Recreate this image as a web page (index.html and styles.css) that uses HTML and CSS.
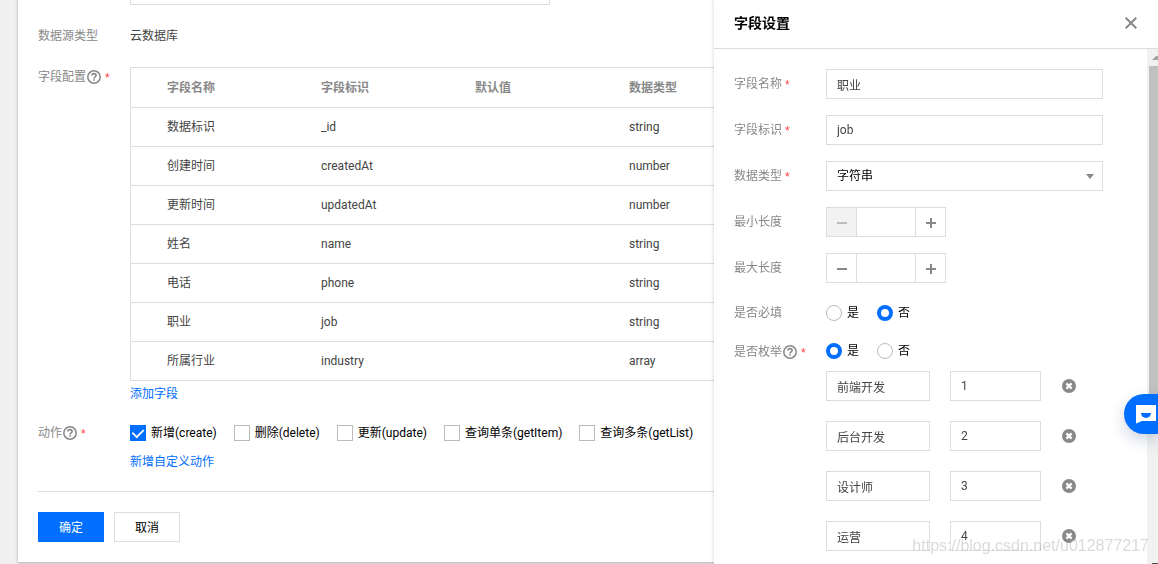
FILE: index.html
```html
<!DOCTYPE html>
<html lang="zh-CN">
<head>
<meta charset="utf-8">
<title>字段设置</title>
<meta name="viewport" content="width=device-width, initial-scale=1">
<link rel="stylesheet" href="styles.css">
</head>
<body>
<svg class="sprite" aria-hidden="true">
  <symbol id="help" viewBox="0 0 16 16">
    <circle cx="8" cy="8" r="6.2" fill="none" stroke="currentColor" stroke-width="1.5"/>
    <path d="M5.9 6.6c0-1.2.9-2 2.1-2s2.1.7 2.1 1.8c0 1.5-2 1.5-2 3" fill="none" stroke="currentColor" stroke-width="1.6"/>
    <path d="M7.3 10.2h1.6v1.5H7.3z" fill="currentColor"/>
  </symbol>
  <symbol id="remove" viewBox="0 0 14 14">
    <circle cx="7" cy="7" r="7" fill="currentColor"/>
    <path d="M4.4 4.4l5.2 5.2M9.6 4.4L4.4 9.6" stroke="#fff" stroke-width="2.2"/>
  </symbol>
  <symbol id="minus" viewBox="0 0 10 10"><path d="M0 4h10v2H0z" fill="currentColor"/></symbol>
  <symbol id="plus" viewBox="0 0 10 10"><path d="M0 4h4V0h2v4h4v2H6v4H4V6H0z" fill="currentColor"/></symbol>
</svg>

<main class="card">
  <form class="model-form">
    <div class="form-row">
      <span class="label"></span>
      <div class="control"><input class="text-input name-input" type="text" aria-label="名称"></div>
    </div>
    <div class="form-row">
      <span class="label static-text">数据源类型</span>
      <div class="control static-text">云数据库</div>
    </div>
    <div class="form-row">
      <span class="label">字段配置<svg class="help-icon"><use href="#help"/></svg><span class="required">*</span></span>
      <div class="control">
        <table class="field-table">
          <colgroup><col class="col-first"><col class="col-mid"><col class="col-mid"><col></colgroup>
          <thead><tr><th>字段名称</th><th>字段标识</th><th>默认值</th><th>数据类型</th></tr></thead>
          <tbody>
            <tr><td>数据标识</td><td>_id</td><td></td><td>string</td></tr>
            <tr><td>创建时间</td><td>createdAt</td><td></td><td>number</td></tr>
            <tr><td>更新时间</td><td>updatedAt</td><td></td><td>number</td></tr>
            <tr><td>姓名</td><td>name</td><td></td><td>string</td></tr>
            <tr><td>电话</td><td>phone</td><td></td><td>string</td></tr>
            <tr><td>职业</td><td>job</td><td></td><td>string</td></tr>
            <tr><td>所属行业</td><td>industry</td><td></td><td>array</td></tr>
          </tbody>
        </table>
        <a class="link link-field" href="#">添加字段</a>
      </div>
    </div>
    <div class="form-row">
      <span class="label">动作<svg class="help-icon"><use href="#help"/></svg><span class="required">*</span></span>
      <div class="control">
        <div class="checks">
          <label class="check"><input type="checkbox" checked>新增(create)</label>
          <label class="check"><input type="checkbox">删除(delete)</label>
          <label class="check"><input type="checkbox">更新(update)</label>
          <label class="check"><input type="checkbox">查询单条(getItem)</label>
          <label class="check"><input type="checkbox">查询多条(getList)</label>
        </div>
        <a class="link link-action" href="#">新增自定义动作</a>
      </div>
    </div>
    <div class="actions">
      <button class="btn btn-primary" type="button">确定</button>
      <button class="btn" type="button">取消</button>
    </div>
  </form>
</main>

<aside class="drawer">
  <header class="drawer-head">
    <h2>字段设置</h2>
    <button class="icon-btn" type="button" aria-label="关闭"><svg class="close-icon" viewBox="0 0 12 12"><path d="M.7.7l10.6 10.6M11.3.7L.7 11.3" stroke="currentColor" stroke-width="2"/></svg></button>
  </header>
  <div class="drawer-main">
    <form class="drawer-form">
      <div class="field">
        <label class="label" for="f-name">字段名称<span class="required">*</span></label>
        <input class="text-input" id="f-name" type="text" value="职业">
      </div>
      <div class="field">
        <label class="label" for="f-key">字段标识<span class="required">*</span></label>
        <input class="text-input" id="f-key" type="text" value="job">
      </div>
      <div class="field">
        <label class="label" for="f-type">数据类型<span class="required">*</span></label>
        <div class="select-wrap"><select class="text-input select" id="f-type"><option>字符串</option></select></div>
      </div>
      <div class="field">
        <label class="label" for="f-min">最小长度</label>
        <div class="stepper">
          <button type="button" disabled aria-label="减少"><svg><use href="#minus"/></svg></button>
          <input id="f-min" type="text">
          <button type="button" aria-label="增加"><svg><use href="#plus"/></svg></button>
        </div>
      </div>
      <div class="field">
        <label class="label" for="f-max">最大长度</label>
        <div class="stepper">
          <button type="button" aria-label="减少"><svg><use href="#minus"/></svg></button>
          <input id="f-max" type="text">
          <button type="button" aria-label="增加"><svg><use href="#plus"/></svg></button>
        </div>
      </div>
      <div class="field field-required">
        <span class="label">是否必填</span>
        <div class="radios">
          <label class="radio"><input type="radio" name="required">是</label>
          <label class="radio"><input type="radio" name="required" checked>否</label>
        </div>
      </div>
      <div class="field field-enum">
        <span class="label">是否枚举<svg class="help-icon"><use href="#help"/></svg><span class="required">*</span></span>
        <div>
          <div class="radios">
            <label class="radio"><input type="radio" name="enum" checked>是</label>
            <label class="radio"><input type="radio" name="enum">否</label>
          </div>
          <div class="enum-list">
            <div class="enum-row"><input class="text-input" type="text" value="前端开发" aria-label="枚举名称"><input class="text-input" type="text" value="1" aria-label="枚举值"><button class="icon-btn" type="button" aria-label="删除"><svg class="remove-icon"><use href="#remove"/></svg></button></div>
            <div class="enum-row"><input class="text-input" type="text" value="后台开发" aria-label="枚举名称"><input class="text-input" type="text" value="2" aria-label="枚举值"><button class="icon-btn" type="button" aria-label="删除"><svg class="remove-icon"><use href="#remove"/></svg></button></div>
            <div class="enum-row"><input class="text-input" type="text" value="设计师" aria-label="枚举名称"><input class="text-input" type="text" value="3" aria-label="枚举值"><button class="icon-btn" type="button" aria-label="删除"><svg class="remove-icon"><use href="#remove"/></svg></button></div>
            <div class="enum-row"><input class="text-input" type="text" value="运营" aria-label="枚举名称"><input class="text-input" type="text" value="4" aria-label="枚举值"><button class="icon-btn" type="button" aria-label="删除"><svg class="remove-icon"><use href="#remove"/></svg></button></div>
          </div>
        </div>
      </div>
    </form>
    <div class="scrollbar" aria-hidden="true">
      <svg class="scroll-arrow" viewBox="0 0 9 17"><path d="M3 11l4-4h2v4z" fill="#a3a3a3"/></svg>
      <div class="scroll-thumb"></div>
      <div class="scroll-end"></div>
    </div>
  </div>
</aside>

<button class="chat" type="button" aria-label="在线咨询">
  <svg class="chat-icon" viewBox="0 0 20 20"><path d="M0 1h20v16H6l-6 2.5z" fill="#fff"/><path d="M5 9h10a5 5 0 0 1-10 0z" fill="#006eff"/></svg>
</button>
<div class="watermark">https://blog.csdn.net/u012877217</div>
</body>
</html>
```

FILE: styles.css
```css
* { box-sizing: border-box; }

html, body { height: 100%; }

body {
  margin: 0;
  overflow: hidden;
  background: #f0f0f0;
  color: #444;
  font: 12px/20px Roboto, "Noto Sans CJK SC", sans-serif;
}

input, button, select { font: inherit; color: inherit; margin: 0; }
button { cursor: pointer; }
.sprite { display: none; }

/* Form card, scrolled so that its first input is partly out of view */
.card {
  margin: -45px 0 0 18px;
  padding: 20px;
  background: #fff;
  box-shadow: 0 1px 3px rgba(0, 0, 0, .3);
}
.model-form { display: flex; flex-direction: column; gap: 20px; }
.form-row { display: grid; grid-template-columns: 92px minmax(0, 1fr); }

.label { display: flex; align-items: center; align-self: start; color: #888; white-space: nowrap; }
.help-icon { width: 16px; height: 16px; }
.required { margin-left: 3px; padding-top: 2px; color: #ff4040; font-family: "Liberation Sans", sans-serif; line-height: 16px; }
.static-text { line-height: 22px; }

.text-input {
  display: block;
  width: 100%;
  height: 30px;
  padding: 0 10px;
  border: 1px solid #ddd;
  border-radius: 0;
  background: #fff;
  outline: none;
}
.name-input { max-width: 420px; }

.field-table {
  width: 100%;
  table-layout: fixed;
  border: 1px solid #ddd;
  border-bottom: 0;
  border-spacing: 0;
}
.col-first { width: 180px; }
.col-mid { width: 154px; }
.field-table th, .field-table td {
  height: 39px;
  padding: 0 10px;
  border-bottom: 1px solid #ddd;
  text-align: left;
}
.field-table th { height: 40px; color: #888; font-weight: 700; }
.field-table tr > :first-child { padding-left: 36px; }

.link { display: block; width: max-content; line-height: 18px; color: #006eff; text-decoration: none; }
.link-field { margin-top: 4px; }
.link-action { margin-top: 10px; }

.checks { display: flex; gap: 17px; color: #000; white-space: nowrap; }
.check, .radio { display: flex; align-items: center; gap: 5px; }
.check input {
  width: 16px;
  height: 16px;
  border: 1px solid #bbb;
  appearance: none;
  background: #fff;
}
.check input:checked { display: grid; place-items: center; border-color: #006eff; background: #006eff; }
.check input:checked::before {
  content: "";
  width: 10px;
  height: 6px;
  margin-bottom: 3px;
  border: solid #fff;
  border-width: 0 0 2px 2px;
  transform: rotate(-45deg) scale(.9);
}

.actions { display: flex; gap: 10px; padding-top: 20px; border-top: 1px solid #ddd; }
.btn { height: 30px; padding: 1px 20px 0; border: 1px solid #ddd; background: #fff; color: #000; }
.btn-primary { border-color: #006eff; background: #006eff; color: #fff; }

/* Side drawer over the card */
.drawer {
  position: fixed;
  top: 0;
  right: 0;
  bottom: 0;
  display: flex;
  flex-direction: column;
  width: 444px;
  background: #fff;
  box-shadow: 0 0 4px rgba(0, 0, 0, .2);
}
.drawer-head {
  display: flex;
  align-items: center;
  justify-content: space-between;
  height: 49px;
  padding: 0 21px 2px 20px;
  border-bottom: 1px solid #ddd;
}
.drawer-head h2 { margin: 0; color: #000; font-size: 14px; font-weight: 700; }
.icon-btn { display: flex; padding: 0; border: 0; background: none; color: #888; }
.close-icon { width: 12px; height: 12px; }
.drawer-main { display: flex; flex: 1; min-height: 0; }
.drawer-form {
  display: flex;
  flex: 1;
  flex-direction: column;
  gap: 16px;
  padding: 20px 44px 0 20px;
  overflow: hidden;
}
.field { display: grid; flex: none; grid-template-columns: 92px minmax(0, 1fr); }
.field .label { height: 30px; }
.field-required { padding-top: 3px; }
.field-required .label { height: 22px; }
.field-enum .label { height: 24px; }

.select-wrap { position: relative; }
.select { appearance: none; color: #000; }
.select-wrap::after {
  content: "";
  position: absolute;
  top: 13px;
  right: 9px;
  border: solid transparent;
  border-width: 5px 4px 0;
  border-top-color: #888;
  pointer-events: none;
}

.stepper { display: flex; width: 120px; height: 30px; border: 1px solid #ddd; }
.stepper button {
  display: grid;
  flex: none;
  place-items: center;
  width: 29px;
  padding: 2px 0 0;
  border: 0;
  background: #fff;
  color: #888;
}
.stepper button:disabled { background: #f2f2f2; color: #bbb; }
.stepper svg { width: 10px; height: 10px; }
.stepper input { flex: 1; min-width: 0; padding: 0 8px; border: solid #ddd; border-width: 0 1px; outline: none; }

.radios { display: flex; gap: 18px; height: 22px; color: #000; }
.radio input { width: 16px; height: 16px; border: 1px solid #bbb; border-radius: 50%; appearance: none; background: #fff; }
.radio input:checked { border: 4px solid #006eff; }

.enum-list { display: flex; flex-direction: column; gap: 20px; margin-top: 9px; }
.enum-row { display: grid; grid-template-columns: 104px 91px 14px; align-items: center; column-gap: 20px; }
.enum-row .icon-btn { margin-left: 1px; }
.remove-icon { flex: none; width: 14px; height: 14px; }

.scrollbar { display: flex; flex: none; flex-direction: column; width: 11px; padding-left: 2px; background: #f1f1f1; }
.scroll-arrow { flex: none; width: 9px; height: 17px; }
.scroll-thumb { height: 68%; background: #c1c1c1; }
.scroll-end { width: 6px; height: 1px; margin: auto 0 0 auto; background: #505050; }

/* Floating consultation button */
.chat {
  position: fixed;
  right: 0;
  bottom: 130px;
  display: flex;
  align-items: center;
  width: 34px;
  height: 40px;
  padding: 0 0 0 12px;
  border: 0;
  border-radius: 20px 0 0 20px;
  background: #006eff;
  box-shadow: 0 6px 16px rgba(0, 40, 100, .2);
}
.chat-icon { flex: none; width: 20px; height: 20px; }

.watermark {
  position: fixed;
  right: 9px;
  bottom: 8px;
  color: rgba(150, 150, 150, .35);
  font: 16px/20px "Liberation Sans", sans-serif;
  text-shadow: 1px 1px 1px rgba(255, 255, 255, .6);
  pointer-events: none;
}
```
